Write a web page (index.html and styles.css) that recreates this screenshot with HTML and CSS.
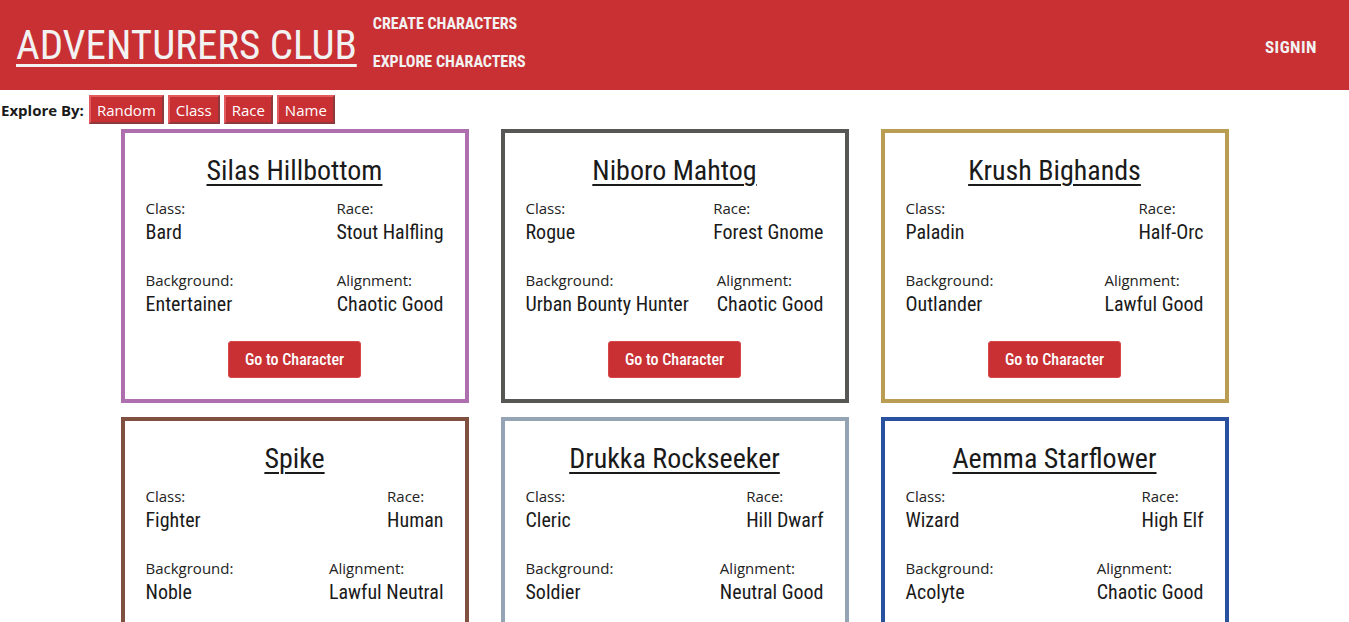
FILE: index.html
```html
<!DOCTYPE html>
<html>
<head>
<meta charset="utf-8">
<link rel="stylesheet" href="styles.css">
</head>
<body>
<header class="topbar">
  <a class="brand" href="#">ADVENTURERS CLUB</a>
  <nav class="mainnav">
    <a href="#">CREATE CHARACTERS</a>
    <a href="#">EXPLORE CHARACTERS</a>
  </nav>
  <a class="signin" href="#">SIGNIN</a>
</header>
<div class="explore">
  <span class="explore-label">Explore By:</span>
  <button class="filter">Random</button>
  <button class="filter">Class</button>
  <button class="filter">Race</button>
  <button class="filter">Name</button>
</div>
<main class="grid">
  <section class="card purple">
    <a class="name" href="#">Silas Hillbottom</a>
    <div class="row"><div class="field"><span class="lbl">Class:</span><span class="val">Bard</span></div><div class="field"><span class="lbl">Race:</span><span class="val">Stout Halfling</span></div></div>
    <div class="row"><div class="field"><span class="lbl">Background:</span><span class="val">Entertainer</span></div><div class="field"><span class="lbl">Alignment:</span><span class="val">Chaotic Good</span></div></div>
    <button class="go">Go to Character</button>
  </section>
  <section class="card gray">
    <a class="name" href="#">Niboro Mahtog</a>
    <div class="row"><div class="field"><span class="lbl">Class:</span><span class="val">Rogue</span></div><div class="field"><span class="lbl">Race:</span><span class="val">Forest Gnome</span></div></div>
    <div class="row"><div class="field"><span class="lbl">Background:</span><span class="val">Urban Bounty Hunter</span></div><div class="field"><span class="lbl">Alignment:</span><span class="val">Chaotic Good</span></div></div>
    <button class="go">Go to Character</button>
  </section>
  <section class="card gold">
    <a class="name" href="#">Krush Bighands</a>
    <div class="row"><div class="field"><span class="lbl">Class:</span><span class="val">Paladin</span></div><div class="field"><span class="lbl">Race:</span><span class="val">Half-Orc</span></div></div>
    <div class="row"><div class="field"><span class="lbl">Background:</span><span class="val">Outlander</span></div><div class="field"><span class="lbl">Alignment:</span><span class="val">Lawful Good</span></div></div>
    <button class="go">Go to Character</button>
  </section>
  <section class="card brown">
    <a class="name" href="#">Spike</a>
    <div class="row"><div class="field"><span class="lbl">Class:</span><span class="val">Fighter</span></div><div class="field"><span class="lbl">Race:</span><span class="val">Human</span></div></div>
    <div class="row"><div class="field"><span class="lbl">Background:</span><span class="val">Noble</span></div><div class="field"><span class="lbl">Alignment:</span><span class="val">Lawful Neutral</span></div></div>
    <button class="go">Go to Character</button>
  </section>
  <section class="card steel">
    <a class="name" href="#">Drukka Rockseeker</a>
    <div class="row"><div class="field"><span class="lbl">Class:</span><span class="val">Cleric</span></div><div class="field"><span class="lbl">Race:</span><span class="val">Hill Dwarf</span></div></div>
    <div class="row"><div class="field"><span class="lbl">Background:</span><span class="val">Soldier</span></div><div class="field"><span class="lbl">Alignment:</span><span class="val">Neutral Good</span></div></div>
    <button class="go">Go to Character</button>
  </section>
  <section class="card blue">
    <a class="name" href="#">Aemma Starflower</a>
    <div class="row"><div class="field"><span class="lbl">Class:</span><span class="val">Wizard</span></div><div class="field"><span class="lbl">Race:</span><span class="val">High Elf</span></div></div>
    <div class="row"><div class="field"><span class="lbl">Background:</span><span class="val">Acolyte</span></div><div class="field"><span class="lbl">Alignment:</span><span class="val">Chaotic Good</span></div></div>
    <button class="go">Go to Character</button>
  </section>
</main>
</body>
</html>
```
FILE: styles.css
```css
html, body {
  margin: 0;
  padding: 0;
  background: #fff;
  font-family: "Open Sans", "Noto Sans", sans-serif;
  color: #1a1a1a;
}

.topbar {
  display: flex;
  align-items: center;
  height: 90px;
  background: #c83034;
  padding: 0 32px 0 16px;
  box-sizing: border-box;
}

.brand,
.mainnav a,
.signin,
.name,
.val,
.go {
  font-family: "Roboto Condensed", "Open Sans Condensed", "Open Sans", sans-serif;
  font-stretch: 75%;
}

.brand {
  font-size: 41px;
  color: #f2f2f2;
  text-decoration: underline;
  text-decoration-thickness: 3px;
  text-underline-offset: 5px;
  line-height: 1;
}

.mainnav {
  display: flex;
  flex-direction: column;
  gap: 18px;
  margin-left: 16px;
  align-self: flex-start;
  padding-top: 14px;
}

.mainnav a,
.signin {
  font-weight: bold;
  font-size: 16px;
  color: #f2f2f2;
  text-decoration: none;
  line-height: 20px;
}

.signin {
  margin-left: auto;
  letter-spacing: 0.5px;
  font-size: 17px;
  margin-top: 3px;
}

.explore {
  display: flex;
  align-items: center;
  gap: 4px;
  margin-top: 5px;
  height: 29px;
}

.explore-label {
  font-weight: bold;
  font-size: 15px;
  margin-right: 1px;
  margin-left: 1px;
}

.filter {
  font-family: "Open Sans", "Noto Sans", sans-serif;
  font-size: 15px;
  color: #fff;
  background: #c83034;
  border: 2px outset #e25b5e;
  height: 29px;
  padding: 0 6px;
  margin: 0;
}

.grid {
  display: grid;
  grid-template-columns: repeat(3, 348px);
  column-gap: 32px;
  row-gap: 14px;
  justify-content: center;
  margin-top: 5px;
}

.card {
  border: 4px solid #999;
  padding: 20px 21px 21px;
  display: flex;
  flex-direction: column;
  box-sizing: border-box;
  height: 274px;
}

.card.purple { border-color: #ad6fad; }
.card.gray { border-color: #575755; }
.card.gold { border-color: #b89d52; }
.card.brown { border-color: #805040; }
.card.steel { border-color: #94a4b4; }
.card.blue { border-color: #2a51a0; }

.name {
  align-self: center;
  font-size: 28px;
  color: #1a1a1a;
  text-decoration: underline;
  text-decoration-thickness: 2px;
  text-underline-offset: 4px;
  line-height: 36px;
  margin-bottom: 9px;
}

.row {
  display: flex;
  justify-content: space-between;
  margin-bottom: 24px;
}

.field {
  display: flex;
  flex-direction: column;
  white-space: nowrap;
}

.lbl {
  font-size: 15px;
  line-height: 20px;
  font-weight: 400;
  color: #222;
}

.val {
  font-size: 20px;
  line-height: 28px;
}

.go {
  align-self: center;
  margin-top: -1px;
  font-size: 16px;
  font-weight: 500;
  color: #fff;
  background: #c83034;
  border: 1px solid #d8474a;
  border-radius: 3px;
  width: 133px;
  height: 37px;
  padding: 0;
}
```
